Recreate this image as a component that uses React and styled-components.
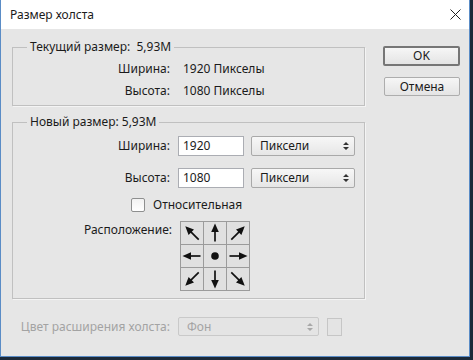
import styled, { createGlobalStyle } from 'styled-components';

const GlobalStyle = createGlobalStyle`
  body {
    margin: 0;
    background: #1c2a39;
    font-family: 'Noto Sans', 'Open Sans', sans-serif;
    font-size: 12px;
    color: #1b1b1b;
  }
`;

const Window = styled.div`
  width: 470px;
  height: 357px;
  box-sizing: border-box;
  border: 1px solid #5a8cc6;
  border-top: none;
  background: #e6e6e6;
  display: flex;
  flex-direction: column;
`;

const TitleBar = styled.div`
  height: 29px;
  background: #fff;
  display: flex;
  align-items: center;
  justify-content: space-between;
  padding: 0 8px 0 9px;
  flex-shrink: 0;
`;

const Title = styled.span`
  font-size: 12px;
  line-height: 16px;
`;

const Body = styled.div`
  display: flex;
  flex: 1;
`;

const LeftColumn = styled.div`
  width: 353px;
  margin-left: 11px;
  display: flex;
  flex-direction: column;
`;

const Group = styled.fieldset`
  margin: ${(p) => p.$top}px 0 0;
  padding: ${(p) => p.$pad};
  border: 1px solid #c0c0c0;
  box-shadow: 1px 1px 0 #f4f4f4;
  min-inline-size: 0;
`;

const Legend = styled.legend`
  margin-left: 14px;
  padding: 0 3px;
  line-height: 16px;
`;

const InfoRow = styled.div`
  display: grid;
  grid-template-columns: 157px auto;
  column-gap: 13px;
  height: 22px;
  align-items: center;
  line-height: 16px;
`;

const Label = styled.span`
  width: ${(p) => p.$w || 157}px;
  text-align: right;
  flex-shrink: 0;
  color: ${(p) => (p.$disabled ? '#a3a3a3' : 'inherit')};
  align-self: ${(p) => (p.$top ? 'flex-start' : 'center')};
  padding-top: ${(p) => (p.$top ? 1 : 0)}px;
  line-height: 16px;
`;

const FieldRow = styled.div`
  display: flex;
  align-items: center;
  gap: 8px;
  margin-top: ${(p) => p.$mt || 0}px;
  padding-left: ${(p) => p.$pl || 0}px;
`;

const TextInput = styled.div`
  width: 66px;
  height: 20px;
  box-sizing: border-box;
  border: 1px solid #abadb3;
  background: #fff;
  padding: 0 4px;
  line-height: 18px;
  margin-right: -1px;
`;

const SelectBox = styled.div`
  width: ${(p) => p.$w}px;
  height: ${(p) => p.$h || 20}px;
  box-sizing: border-box;
  border: 1px solid ${(p) => (p.$disabled ? '#c9c9c9' : '#a9a9a9')};
  border-radius: 2px;
  background: ${(p) =>
    p.$disabled ? '#e4e4e4' : 'linear-gradient(#f7f7f7, #e6e6e6)'};
  color: ${(p) => (p.$disabled ? '#a3a3a3' : 'inherit')};
  display: flex;
  align-items: center;
  justify-content: space-between;
  padding: 0 5px 0 8px;
  line-height: 16px;
`;

const CheckBox = styled.span`
  width: 14px;
  height: 14px;
  box-sizing: border-box;
  border: 1px solid #8e8f8f;
  border-radius: 2px;
  background: linear-gradient(#f2f2f2, #ffffff);
`;

const AnchorGrid = styled.div`
  display: grid;
  grid-template-columns: repeat(3, 22px);
  grid-auto-rows: 22px;
  gap: 1px;
  padding: 1px;
  background: #9b9b9b;
`;

const AnchorCell = styled.div`
  background: #e0e0e0;
  display: flex;
  align-items: center;
  justify-content: center;
`;

const Swatch = styled.span`
  width: 15px;
  height: 18px;
  box-sizing: border-box;
  border: 1px solid #c6c6c6;
  background: #e4e4e4;
`;

const ButtonColumn = styled.div`
  display: flex;
  flex-direction: column;
  align-items: flex-end;
  width: 78px;
  margin-left: 17px;
  padding-top: 17px;
`;

const Button = styled.div`
  width: ${(p) => (p.$primary ? 77 : 76)}px;
  height: ${(p) => (p.$primary ? 20 : 19)}px;
  box-sizing: border-box;
  margin-top: ${(p) => p.$mt || 0}px;
  border: ${(p) => (p.$primary ? '2px solid #767676' : '1px solid #adadad')};
  border-radius: 2px;
  background: linear-gradient(#f6f6f6, #e4e4e4);
  display: flex;
  align-items: center;
  justify-content: center;
  line-height: 16px;
`;

function CloseIcon() {
  return (
    <svg width="11" height="11" viewBox="0 0 11 11">
      <path d="M0.5 0.5 L10.5 10.5 M10.5 0.5 L0.5 10.5" stroke="#222" strokeWidth="1" />
    </svg>
  );
}

function UpDown({ color = '#333' }) {
  return (
    <svg width="6" height="10" viewBox="0 0 6 10">
      <path d="M0 4 L3 1 L6 4 Z M0 6 L3 9 L6 6 Z" fill={color} />
    </svg>
  );
}

// one arrow pointing up, turned to each direction
function Arrow({ deg }) {
  const len = deg % 90 === 0 ? 19.5 : 20.5;
  return (
    <svg width="22" height="22" viewBox="0 0 22 22">
      <g transform={`rotate(${deg} 11 11)`}>
        <line x1="11" y1={len} x2="11" y2="8" stroke="#111" strokeWidth="1.7" />
        <path d="M11 1.5 L7.2 10 L14.8 10 Z" fill="#111" />
      </g>
    </svg>
  );
}

const anchors = [-45, 0, 45, -90, null, 90, -135, 180, 135];

export default function App() {
  return (
    <>
      <GlobalStyle />
      <Window>
        <TitleBar>
          <Title>Размер холста</Title>
          <CloseIcon />
        </TitleBar>
        <Body>
          <LeftColumn>
            <Group $top={10} $pad="3px 0 3px">
              <Legend>Текущий размер:&nbsp;&nbsp;5,93M</Legend>
              <InfoRow>
                <Label>Ширина:</Label>
                <span>1920 Пикселы</span>
              </InfoRow>
              <InfoRow>
                <Label>Высота:</Label>
                <span>1080 Пикселы</span>
              </InfoRow>
            </Group>

            <Group $top={8} $pad="6px 0 7px">
              <Legend>Новый размер: 5,93M</Legend>
              <FieldRow>
                <Label>Ширина:</Label>
                <TextInput>1920</TextInput>
                <SelectBox $w={104}>
                  <span>Пиксели</span>
                  <UpDown />
                </SelectBox>
              </FieldRow>
              <FieldRow $mt={12}>
                <Label>Высота:</Label>
                <TextInput>1080</TextInput>
                <SelectBox $w={104}>
                  <span>Пиксели</span>
                  <UpDown />
                </SelectBox>
              </FieldRow>
              <FieldRow $mt={8} $pl={118}>
                <CheckBox />
                <span>Относительная</span>
              </FieldRow>
              <FieldRow $mt={8}>
                <Label $w={159} $top>
                  Расположение:
                </Label>
                <AnchorGrid>
                  {anchors.map((deg, i) => (
                    <AnchorCell key={i}>
                      {deg === null ? (
                        <svg width="10" height="10" viewBox="0 0 10 10">
                          <circle cx="5" cy="5" r="3.8" fill="#111" />
                        </svg>
                      ) : (
                        <Arrow deg={deg} />
                      )}
                    </AnchorCell>
                  ))}
                </AnchorGrid>
              </FieldRow>
            </Group>

            <FieldRow $mt={18}>
              <Label $w={158} $disabled>
                Цвет расширения холста:
              </Label>
              <SelectBox $w={141} $h={19} $disabled>
                <span>Фон</span>
                <UpDown color="#a8a8a8" />
              </SelectBox>
              <Swatch />
            </FieldRow>
          </LeftColumn>

          <ButtonColumn>
            <Button $primary>OK</Button>
            <Button $mt={11}>Отмена</Button>
          </ButtonColumn>
        </Body>
      </Window>
    </>
  );
}
